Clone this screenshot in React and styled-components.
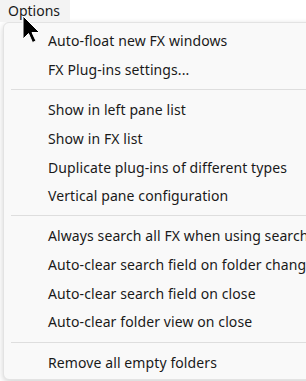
import React from "react";
import styled, { createGlobalStyle } from "styled-components";

const Global = createGlobalStyle`
  html, body {
    margin: 0;
    padding: 0;
    background: #ffffff;
    overflow: hidden;
  }
  body {
    font-family: "Segoe UI", "Noto Sans", sans-serif;
    color: #1a1a1a;
  }
`;

const Page = styled.div`
  position: relative;
  width: 306px;
  height: 381px;
  overflow: hidden;
`;

const MenuBar = styled.div`
  display: flex;
  height: 22px;
`;

const BarItem = styled.div`
  display: flex;
  align-items: center;
  padding: 0 8px;
  width: 70px;
  box-sizing: border-box;
  background: ${(p) => (p.$open ? "#f3f3f3" : "transparent")};
  font-size: 14px;
  line-height: 22px;
`;

const Dropdown = styled.div`
  margin-left: 3px;
  width: 360px;
  box-sizing: border-box;
  background: #f9f9f9;
  border: 1px solid #e3e3e3;
  border-radius: 6px 0 0 6px;
  box-shadow: 0 2px 6px rgba(0, 0, 0, 0.18);
  padding: 3.5px 0 2px;
`;

const Item = styled.div`
  height: 28.67px;
  display: flex;
  align-items: center;
  padding-left: 44px;
  font-size: 14px;
  letter-spacing: 0.1px;
  white-space: nowrap;
`;

const Separator = styled.div`
  height: 1px;
  background: #dedede;
  margin: 5.3px 0 5.3px 7px;
`;

const Cursor = styled.svg`
  position: absolute;
  left: 22px;
  top: 15px;
  width: 20px;
  height: 30px;
`;

const groups = [
  ["Auto-float new FX windows", "FX Plug-ins settings..."],
  [
    "Show in left pane list",
    "Show in FX list",
    "Duplicate plug-ins of different types",
    "Vertical pane configuration",
  ],
  [
    "Always search all FX when using search",
    "Auto-clear search field on folder change",
    "Auto-clear search field on close",
    "Auto-clear folder view on close",
  ],
  ["Remove all empty folders"],
];

export default function App() {
  return (
    <Page>
      <Global />
      <MenuBar>
        <BarItem $open>Options</BarItem>
      </MenuBar>
      <Dropdown>
        {groups.map((g, gi) => (
          <React.Fragment key={gi}>
            {gi > 0 && <Separator />}
            {g.map((t) => (
              <Item key={t}>{t}</Item>
            ))}
          </React.Fragment>
        ))}
      </Dropdown>
      <Cursor viewBox="0 0 20 30">
        <path
          d="M1 1 L1 24 L6.5 18.5 L10.5 27.5 L14 26 L10 17.5 L17.5 17.5 Z"
          fill="#000"
          stroke="#fff"
          strokeWidth="1"
        />
      </Cursor>
    </Page>
  );
}
